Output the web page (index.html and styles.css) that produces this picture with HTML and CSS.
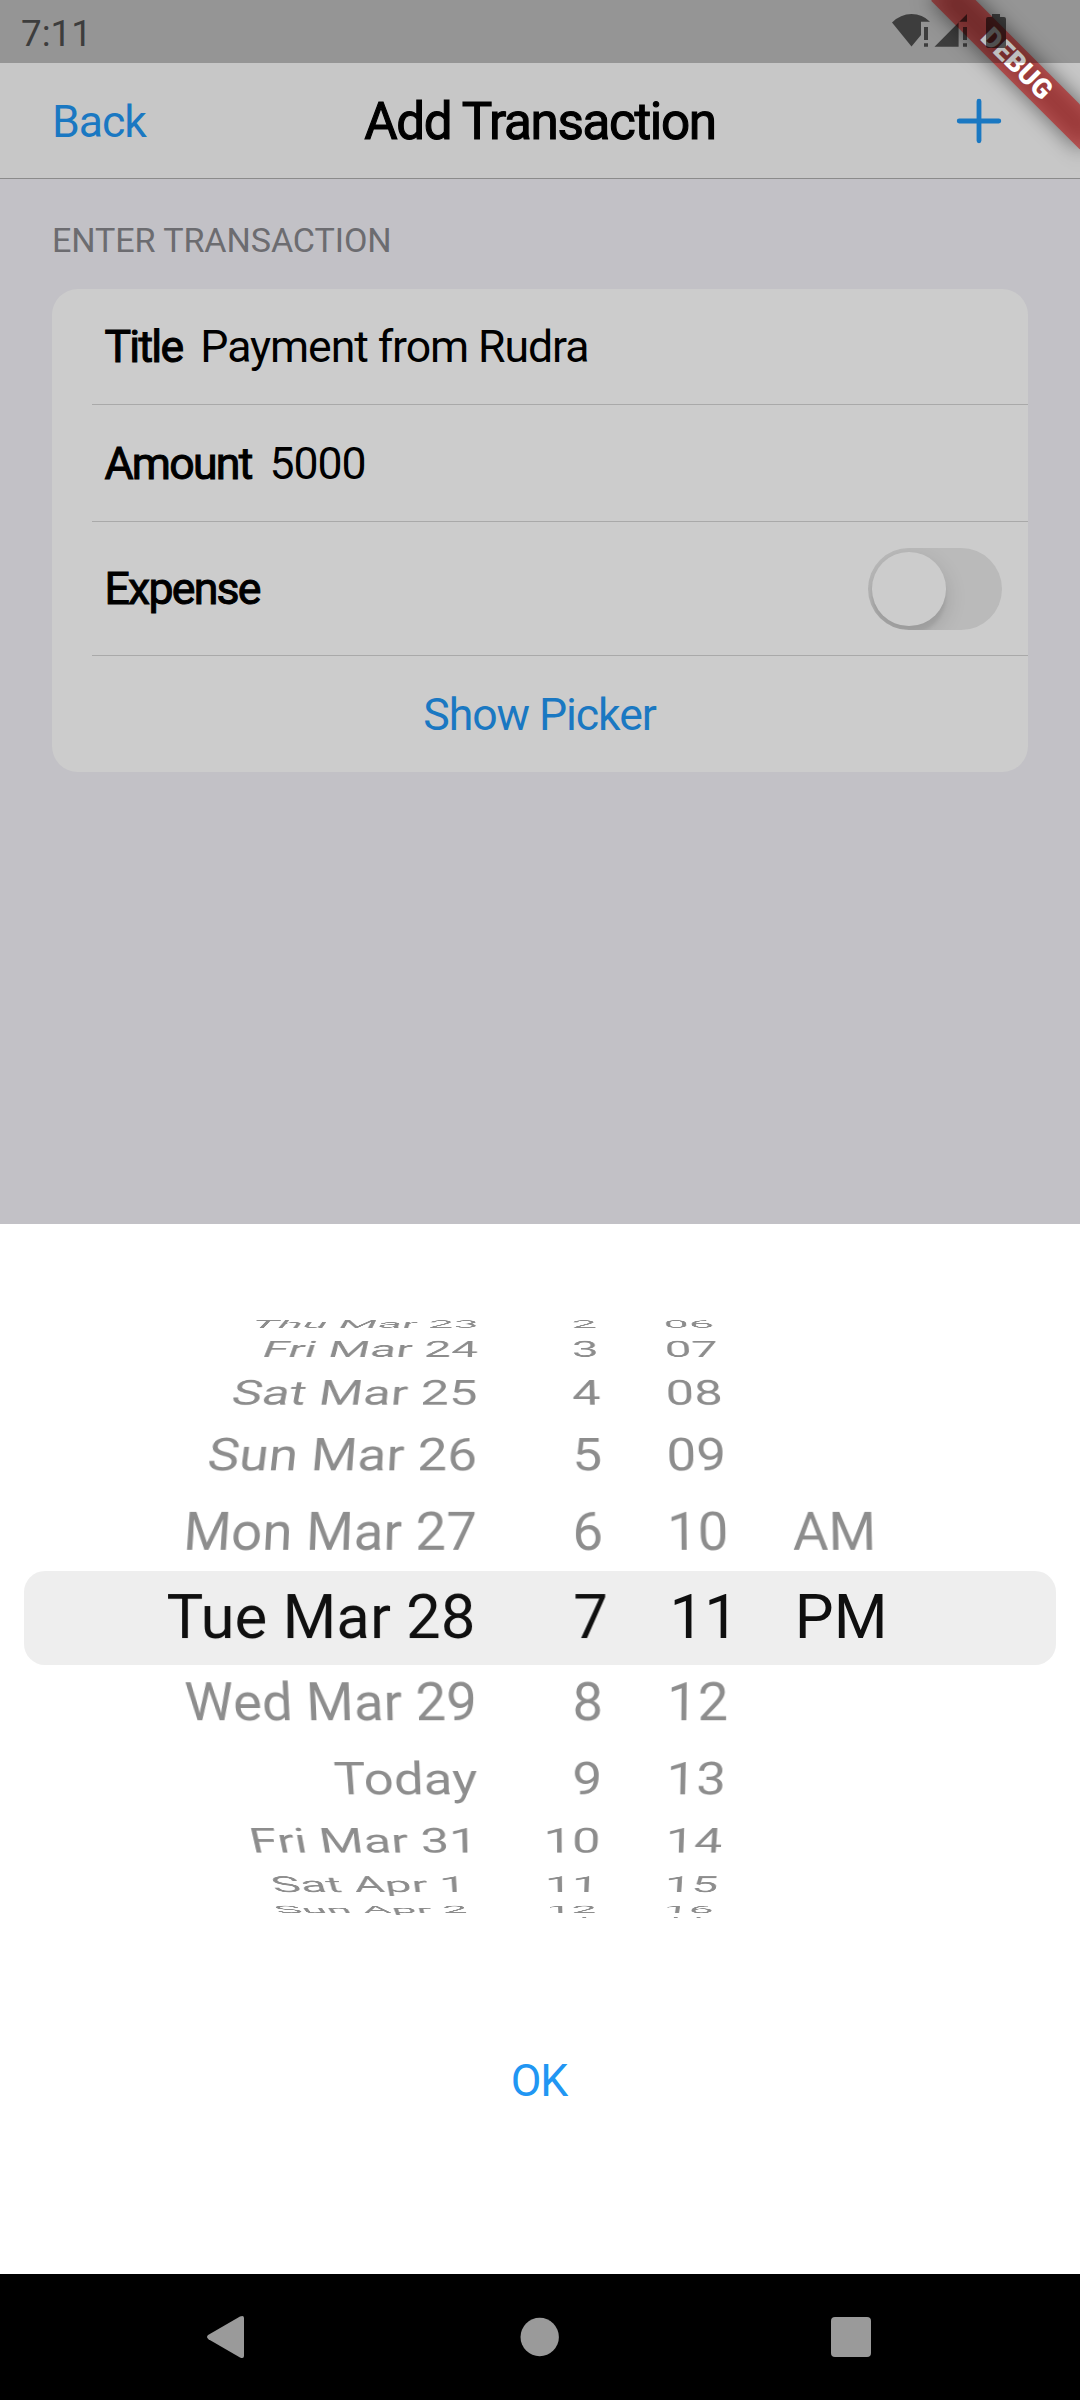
FILE: index.html
```html
<!DOCTYPE html>
<html lang="en">
<head>
<meta charset="utf-8">
<title>Add Transaction</title>
<link rel="stylesheet" href="styles.css">
</head>
<body>
<div class="phone">
  <header class="status">
    <span class="clock">7:11</span>
    <svg class="status-icons" viewBox="0 0 120 36" width="120" height="36">
      <path d="M21.500 34.500 2 10.500Q10.500 2 21.500 2T40 9.800H31V23Z"/>
      <path d="M34 15h4v13h-4zM34 31.300h4v3.500h-4z"/>
      <path d="M44.500 34.700 77 2V9.800H68.600V34.700Z"/>
      <path d="M73 15h4v13h-4zM73 31.300h4v3.500h-4z"/>
      <path d="M102 2h8v3h4q2 0 2 2v27q0 2-2 2H98q-2 0-2-2V7q0-2 2-2h4z"/>
    </svg>
  </header>

  <nav class="navbar">
    <span class="back">Back</span>
    <h1 class="heading">Add Transaction</h1>
    <svg class="plus" viewBox="0 0 46 46" width="46" height="46"><path d="M23 3.200V42.800M3.200 23H42.800"/></svg>
  </nav>

  <main class="form">
    <h2 class="section-title">ENTER TRANSACTION</h2>
    <section class="card">
      <div class="row"><span class="label">Title</span><span class="value">Payment from Rudra</span></div>
      <div class="row"><span class="label">Amount</span><span class="value">5000</span></div>
      <div class="row row-switch"><span class="label">Expense</span><span class="switch"><span class="knob"></span></span></div>
      <div class="row row-action"><span class="link">Show Picker</span></div>
    </section>
  </main>

  <section class="sheet">
    <div class="picker">
      <div class="wheel wheel-date">
        <div class="item up5">Thu Mar 23</div>
        <div class="item up4">Fri Mar 24</div>
        <div class="item up3">Sat Mar 25</div>
        <div class="item up2">Sun Mar 26</div>
        <div class="item up1">Mon Mar 27</div>
        <div class="item selected">Tue Mar 28</div>
        <div class="item down1">Wed Mar 29</div>
        <div class="item down2">Today</div>
        <div class="item down3">Fri Mar 31</div>
        <div class="item down4">Sat Apr 1 </div>
        <div class="item down5">Sun Apr 2 </div>
      </div>
      <div class="wheel wheel-hour">
        <div class="item up5">2</div>
        <div class="item up4">3</div>
        <div class="item up3">4</div>
        <div class="item up2">5</div>
        <div class="item up1">6</div>
        <div class="item selected">7</div>
        <div class="item down1">8</div>
        <div class="item down2">9</div>
        <div class="item down3">10</div>
        <div class="item down4">11</div>
        <div class="item down5">12</div>
        <div class="item down6">1</div>
      </div>
      <div class="wheel wheel-minute">
        <div class="item up5">06</div>
        <div class="item up4">07</div>
        <div class="item up3">08</div>
        <div class="item up2">09</div>
        <div class="item up1">10</div>
        <div class="item selected">11</div>
        <div class="item down1">12</div>
        <div class="item down2">13</div>
        <div class="item down3">14</div>
        <div class="item down4">15</div>
        <div class="item down5">16</div>
        <div class="item down6">17</div>
      </div>
      <div class="wheel wheel-period">
        <div class="item up1">AM</div>
        <div class="item selected">PM</div>
      </div>
      <div class="band"></div>
    </div>
    <div class="ok">OK</div>
  </section>

  <footer class="system-nav">
    <svg viewBox="0 0 44 48" width="44" height="48"><path d="M4.500 21.800 36 3.500Q40 1.800 40 5V43Q40 46.200 36 44.500L4.500 26.200Q1.500 24 4.500 21.800Z"/></svg>
    <svg viewBox="0 0 44 48" width="44" height="48"><circle cx="22.700" cy="24" r="19.200"/></svg>
    <svg viewBox="0 0 44 48" width="44" height="48"><rect x="2" y="4" width="40" height="40" rx="4"/></svg>
  </footer>

  <div class="banner"><span class="banner-text">DEBUG</span></div>
</div>
</body>
</html>
```
FILE: styles.css
```css
* { box-sizing: border-box; }

body {
  margin: 0;
  font-family: Roboto, "Liberation Sans", sans-serif;
}

.phone {
  position: relative;
  display: flex;
  flex-direction: column;
  width: 1080px;
  height: 2400px;
  overflow: hidden;
  background: #c2c1c6;
}

/* Status bar: translucent, tints whatever lies below it */
.status {
  position: relative;
  z-index: 3;
  display: flex;
  flex: none;
  justify-content: space-between;
  height: 63px;
  padding: 12px 70px 0 21px;
  background: rgba(0, 0, 0, 0.25);
  color: #3d3d3d;
}

.clock {
  font-size: 36.75px;
  line-height: 43px;
}

.status-icons { fill: rgba(0, 0, 0, 0.59); }

.navbar {
  display: grid;
  flex: none;
  grid-template-columns: 1fr auto 1fr;
  align-items: center;
  height: 179px;
  margin-top: -63px;
  padding: 65px 78px 0 52px;
  border-bottom: 1px solid #8b8b8b;
  background: #c7c7c7;
}

.back,
.link,
.ok {
  color: #1a78c2;
  font-size: 44.625px;
  letter-spacing: -1.08px;
}

.heading {
  margin: 0 -26px 0 0;
  color: #000;
  font-size: 51.2px;
  font-weight: 400;
  letter-spacing: -1.35px;
  -webkit-text-stroke: 1.1px #000;
}

.plus {
  justify-self: end;
  margin-top: -2px;
  fill: none;
  stroke: #1a78c2;
  stroke-width: 4.8;
  stroke-linecap: round;
}

.form { height: 1045px; padding: 0 52px; }

.section-title {
  margin: 0;
  padding-top: 41px;
  height: 109.75px;
  color: #6c6c70;
  font-size: 34.125px;
  font-weight: 400;
  line-height: 40px;
  letter-spacing: -0.1px;
}

.card {
  height: 483px;
  border-radius: 26px;
  background: #ccc;
  color: #000;
  font-size: 44.625px;
}

.row {
  position: relative;
  display: flex;
  align-items: center;
  gap: 18px;
  height: 116.5px;
  padding: 0 26px 0 52.5px;
}

.row + .row::before {
  content: "";
  position: absolute;
  top: -1px;
  right: 0;
  left: 40px;
  height: 1px;
  background: #a9a9a9;
}

.row-switch { justify-content: space-between; height: 134.5px; }
.row-action { justify-content: center; padding: 2px 1px 0 0; height: 115.5px; }

.label {
  letter-spacing: -1.75px;
  -webkit-text-stroke: 1px #000;
}

.value { letter-spacing: -1.08px; }

.switch {
  width: 134px;
  height: 81.4px;
  padding: 4px;
  overflow: hidden;
  border-radius: 41px;
  background: #bababa;
}

.knob {
  display: block;
  width: 73.5px;
  height: 73.5px;
  border-radius: 50%;
  background: #ccc;
  box-shadow: 0 8px 21px rgba(0, 0, 0, 0.15), 0 8px 3px rgba(0, 0, 0, 0.06);
}

.sheet {
  flex: none;
  height: 1050px;
  background: #fff;
}

/* Date picker: each wheel is a cylinder seen in perspective */
.picker {
  position: relative;
  display: grid;
  grid-template-columns: 487px 161px 130px 302px;
  grid-template-rows: 785px;
  height: 787px;
}

.wheel {
  display: grid;
  align-items: center;
  perspective: 875px;
}

.wheel-date { perspective-origin: 100% 50%; text-align: right; }
.wheel-date .item { padding-right: 10.3px; }
.wheel-hour { perspective-origin: 50% 50%; text-align: right; }
.wheel-hour .item { padding-right: 44.5px; }
.wheel-minute { perspective-origin: 0 50%; }
.wheel-minute .item { padding-left: 19.2px; }
.wheel-period { perspective-origin: 0 50%; }
.wheel-period .item { padding-left: 15px; }

.item {
  grid-area: 1 / 1;
  color: #8d8d8d;
  font-size: 55.125px;
  line-height: 84px;
  white-space: pre;
}

.up5 { transform: translateZ(-421.3px) rotateX(59deg) translateZ(421.3px); }
.up4 { transform: translateZ(-421.3px) rotateX(47.2deg) translateZ(421.3px); }
.up3 { transform: translateZ(-421.3px) rotateX(35.4deg) translateZ(421.3px); }
.up2 { transform: translateZ(-421.3px) rotateX(23.6deg) translateZ(421.3px); }
.up1 { transform: translateZ(-421.3px) rotateX(11.8deg) translateZ(421.3px); }
.down1 { transform: translateZ(-421.3px) rotateX(-11.8deg) translateZ(421.3px); }
.down2 { transform: translateZ(-421.3px) rotateX(-23.6deg) translateZ(421.3px); }
.down3 { transform: translateZ(-421.3px) rotateX(-35.4deg) translateZ(421.3px); }
.down4 { transform: translateZ(-421.3px) rotateX(-47.2deg) translateZ(421.3px); }
.down5 { transform: translateZ(-421.3px) rotateX(-59deg) translateZ(421.3px); }
.down6 { transform: translateZ(-421.3px) rotateX(-69deg) translateZ(421.3px); }

.selected { color: #000; transform: scale(1.119); }
.wheel-date .selected { transform-origin: 100% 50%; }
.wheel-minute .selected,
.wheel-period .selected { transform-origin: 0 50%; }

.band {
  position: absolute;
  top: 346.5px;
  right: 24px;
  left: 24px;
  height: 94px;
  border-radius: 21px;
  background: rgba(120, 120, 120, 0.125);
}

.ok {
  padding: 43.5px 2px 0 0;
  color: #2196f3;
  line-height: 52px;
  text-align: center;
}

.system-nav {
  display: flex;
  flex: none;
  align-items: center;
  justify-content: space-between;
  height: 126px;
  padding: 0 207px 0 204px;
  background: #000;
}

.system-nav svg { fill: #9a9a9a; }

/* Corner ribbon, lying across the top right corner */
.banner {
  position: absolute;
  z-index: 2;
  top: 73.5px;
  left: 975px;
  width: 210px;
  height: 31.5px;
  transform: rotate(45deg);
  transform-origin: 105px -73.5px;
  text-align: center;
}

.banner::before,
.banner::after {
  content: "";
  position: absolute;
  z-index: -1;
  inset: 0;
}

.banner::before {
  background: rgba(0, 0, 0, 0.5);
  filter: blur(10.4px);
}

.banner::after { background: rgba(183, 28, 28, 0.627); }

.banner-text {
  display: block;
  color: #fff;
  font-size: 27.5px;
  font-weight: 900;
  line-height: 31.5px;
}
```
